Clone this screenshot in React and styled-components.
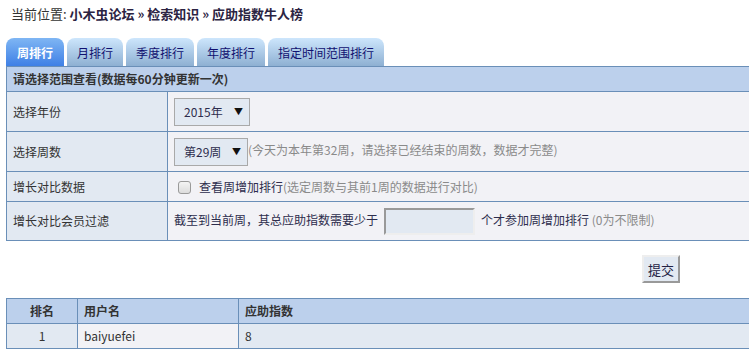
import React, { useState } from "react";
import styled, { createGlobalStyle } from "styled-components";

const GlobalStyle = createGlobalStyle`
  body {
    margin: 0;
    background: #fff;
    overflow: hidden;
    font-family: "Noto Sans CJK SC", "Liberation Sans", sans-serif;
    font-size: 12px;
    line-height: 16px;
    color: #333;
  }
`;

const Page = styled.div`
  width: 749px;
  overflow: hidden;
`;

const Crumb = styled.div`
  padding: 5px 0 0 11px;
  height: 38px;
  box-sizing: border-box;
  font-size: 13px;
  line-height: 18px;
  color: #333;
  b {
    color: #2b2342;
  }
`;

const Tabs = styled.ul`
  list-style: none;
  margin: 0 0 0 6px;
  padding: 0;
  display: flex;
  gap: 3px;
  height: 28px;
`;

const Tab = styled.li`
  height: 28px;
  line-height: 29px;
  padding: 0 ${(p) => (p.$active ? 11 : 10)}px;
  border-radius: 8px 8px 0 0;
  font-size: 12px;
  cursor: pointer;
  color: ${(p) => (p.$active ? "#fff" : "#101070")};
  font-weight: ${(p) => (p.$active ? "bold" : "normal")};
  background: ${(p) =>
    p.$active
      ? "linear-gradient(#7fb6f4, #3f80e6)"
      : "linear-gradient(#cde6fc, #8eb0d2)"};
`;

const Panel = styled.table`
  margin-left: 6px;
  width: 800px;
  border-collapse: collapse;
  td,
  th {
    border: 1px solid #6a8fb8;
    padding: 0 0 0 6px;
    text-align: left;
    font-size: 12px;
    line-height: 16px;
  }
`;

const PanelHead = styled.th`
  height: 24px;
  background: #bcd0ec;
  color: #333;
`;

const Label = styled.td`
  width: 154px;
  background: #e2e9f2;
  height: ${(p) => p.$h}px;
`;

const Field = styled.td`
  background: #f2f2f6;
  color: #2d2d4d;
`;

const Select = styled.div`
  display: inline-flex;
  align-items: center;
  justify-content: space-between;
  box-sizing: border-box;
  width: ${(p) => p.$w}px;
  height: 28px;
  padding: 0 6px 0 9px;
  border: 1px solid #a9a9a9;
  background: #e2e9f2;
  color: #2d2d4d;
  font-size: 12px;
  vertical-align: middle;
  &::after {
    content: "▼";
    font-size: 9px;
    color: #111;
  }
`;

const Hint = styled.span`
  color: #8a8a8a;
`;

const Check = styled.span`
  display: inline-block;
  width: 11px;
  height: 11px;
  margin: 0 8px 0 4px;
  border: 1px solid #9a9a9a;
  border-radius: 3px;
  background: linear-gradient(#f4f4f4, #dcdcdc);
  vertical-align: -2px;
`;

const NumInput = styled.input`
  box-sizing: border-box;
  width: 91px;
  height: 27px;
  margin: 0 6px;
  border: 2px solid;
  border-color: #999 #eee #eee #999;
  background: #e2e9f2;
  vertical-align: middle;
`;

const Actions = styled.div`
  display: flex;
  justify-content: flex-end;
  padding: 14px 69px 0 0;
  height: 57px;
  box-sizing: border-box;
`;

const Submit = styled.button`
  width: 38px;
  height: 28px;
  margin: 0;
  padding: 0;
  font-family: inherit;
  font-size: 13px;
  color: #222244;
  background: #e2e9f2;
  border: 2px solid;
  border-color: #eee #999 #999 #eee;
`;

const Results = styled.table`
  margin-left: 6px;
  width: 800px;
  border-collapse: collapse;
  th,
  td {
    border: 1px solid #6a8fb8;
    height: 24px;
    font-size: 12px;
    line-height: 16px;
    padding: 0 0 0 6px;
    text-align: left;
  }
  th {
    background: #bcd0ec;
    color: #333;
    font-weight: bold;
  }
`;

const HeadCell = styled.th`
  width: ${(p) => p.$w || "auto"};
  text-align: ${(p) => (p.$center ? "center" : "left")} !important;
  padding: ${(p) => (p.$center ? "0" : "0 0 0 6px")} !important;
`;

const Cell = styled.td`
  background: ${(p) => (p.$alt ? "#f2f2f6" : "#e2e9f2")};
  color: #333;
  font-weight: normal;
  text-align: ${(p) => (p.$center ? "center" : "left")} !important;
  padding: ${(p) => (p.$center ? "0" : "0 0 0 6px")} !important;
`;

const tabs = ["周排行", "月排行", "季度排行", "年度排行", "指定时间范围排行"];

const rows = [{ rank: 1, name: "baiyuefei", score: 8 }];

export default function App() {
  const [active, setActive] = useState(0);
  return (
    <Page>
      <GlobalStyle />
      <Crumb>
        当前位置: <b>小木虫论坛 » 检索知识 » 应助指数牛人榜</b>
      </Crumb>
      <Tabs>
        {tabs.map((t, i) => (
          <Tab key={t} $active={active === i} onClick={() => setActive(i)}>
            {t}
          </Tab>
        ))}
      </Tabs>
      <Panel>
        <tbody>
          <tr>
            <PanelHead colSpan={2}>请选择范围查看(数据每60分钟更新一次)</PanelHead>
          </tr>
          <tr>
            <Label $h={39}>选择年份</Label>
            <Field>
              <Select $w={76}>2015年</Select>
            </Field>
          </tr>
          <tr>
            <Label $h={39}>选择周数</Label>
            <Field>
              <Select $w={74}>第29周</Select>
              <Hint>(今天为本年第32周，请选择已经结束的周数，数据才完整)</Hint>
            </Field>
          </tr>
          <tr>
            <Label $h={29}>增长对比数据</Label>
            <Field>
              <Check />
              查看周增加排行<Hint>(选定周数与其前1周的数据进行对比)</Hint>
            </Field>
          </tr>
          <tr>
            <Label $h={38}>增长对比会员过滤</Label>
            <Field>
              截至到当前周，其总应助指数需要少于
              <NumInput type="text" />
              个才参加周增加排行 <Hint>(0为不限制)</Hint>
            </Field>
          </tr>
        </tbody>
      </Panel>
      <Actions>
        <Submit>提交</Submit>
      </Actions>
      <Results>
        <thead>
          <tr>
            <HeadCell $w="70px" $center>排名</HeadCell>
            <HeadCell $w="154px">用户名</HeadCell>
            <HeadCell>应助指数</HeadCell>
          </tr>
        </thead>
        <tbody>
          {rows.map((r) => (
            <tr key={r.rank}>
              <Cell $center>{r.rank}</Cell>
              <Cell $alt>{r.name}</Cell>
              <Cell>{r.score}</Cell>
            </tr>
          ))}
        </tbody>
      </Results>
    </Page>
  );
}
